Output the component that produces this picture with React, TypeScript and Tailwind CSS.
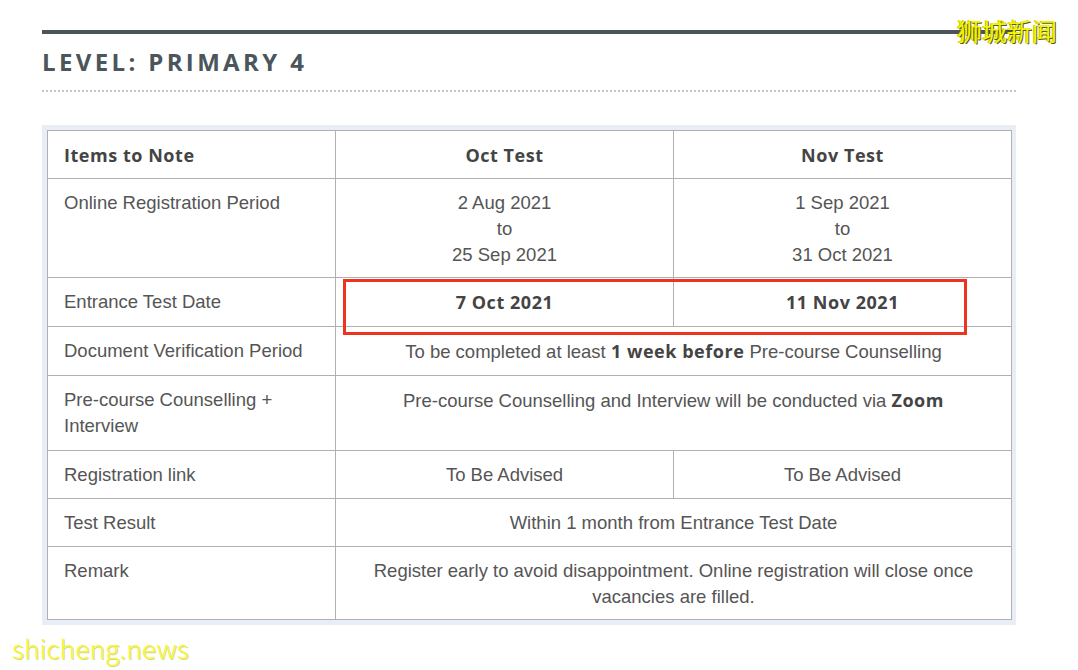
import { ReactNode } from 'react';

const cell = 'border border-[#b0b0b0] px-4 pt-[11px] pb-[9px] align-top leading-[26px]';
const bold = "font-['Open_Sans',sans-serif] text-[18px] font-bold tracking-[0.03em] text-[#444]";

function Td({ children, className = '', colSpan }: { children: ReactNode; className?: string; colSpan?: number }) {
    return (
        <td colSpan={colSpan} className={`${cell} ${className}`}>
            {children}
        </td>
    );
}

export default function App() {
    return (
        <div className="relative h-[670px] w-[1078px] overflow-hidden bg-white font-['Liberation_Sans',Arial,sans-serif] text-[18.5px] text-[#555]">
            <div className="ml-[42px] w-[974px] pt-[30px]">
                <div className="h-[4px] bg-[#4a5459]"></div>
                <h2 className="mt-[13px] font-['Open_Sans',sans-serif] text-[24px] font-bold leading-[30px] tracking-[0.14em] text-[#4b555c]">
                    LEVEL: PRIMARY 4
                </h2>
                <div className="mt-[13px] border-b-2 border-dotted border-[#c4c4c4]"></div>

                <div className="mt-[33px] bg-[#e9eef6] p-[5px]">
                    <table className="w-[964px] table-fixed border-collapse bg-white">
                        <colgroup>
                            <col className="w-[288px]" />
                            <col className="w-[338px]" />
                            <col className="w-[338px]" />
                        </colgroup>
                        <thead>
                            <tr className="h-[48px]">
                                <Td className={bold}>Items to Note</Td>
                                <Td className={`text-center ${bold}`}>Oct Test</Td>
                                <Td className={`text-center ${bold}`}>Nov Test</Td>
                            </tr>
                        </thead>
                        <tbody>
                            <tr className="h-[99px]">
                                <Td>Online Registration Period</Td>
                                <Td className="text-center">
                                    2 Aug 2021
                                    <br />
                                    to
                                    <br />
                                    25 Sep 2021
                                </Td>
                                <Td className="text-center">
                                    1 Sep 2021
                                    <br />
                                    to
                                    <br />
                                    31 Oct 2021
                                </Td>
                            </tr>
                            <tr className="h-[49px]">
                                <Td>Entrance Test Date</Td>
                                <Td className={`text-center ${bold}`}>7 Oct 2021</Td>
                                <Td className={`text-center ${bold}`}>11 Nov 2021</Td>
                            </tr>
                            <tr className="h-[49px]">
                                <Td>Document Verification Period</Td>
                                <Td colSpan={2} className="text-center">
                                    To be completed at least{' '}
                                    <strong className={bold}>1 week before</strong>{' '}
                                    Pre-course Counselling
                                </Td>
                            </tr>
                            <tr className="h-[75px]">
                                <Td>Pre-course Counselling + Interview</Td>
                                <Td colSpan={2} className="text-center">
                                    Pre-course Counselling and Interview will be conducted via{' '}
                                    <strong className={bold}>Zoom</strong>
                                </Td>
                            </tr>
                            <tr className="h-[48px]">
                                <Td>Registration link</Td>
                                <Td className="text-center">To Be Advised</Td>
                                <Td className="text-center">To Be Advised</Td>
                            </tr>
                            <tr className="h-[48px]">
                                <Td>Test Result</Td>
                                <Td colSpan={2} className="text-center">Within 1 month from Entrance Test Date</Td>
                            </tr>
                            <tr className="h-[72px]">
                                <Td>Remark</Td>
                                <Td colSpan={2} className="text-center">
                                    Register early to avoid disappointment. Online registration will close once vacancies are filled.
                                </Td>
                            </tr>
                        </tbody>
                    </table>
                </div>
            </div>

            {/* highlight box over the test dates */}
            <div className="absolute left-[343px] top-[279px] h-[56px] w-[624px] border-[3px] border-[#ee3420]"></div>

            {/* watermarks */}
            <div className="absolute left-[957px] top-[12px] font-['Noto_Sans_CJK_SC',sans-serif] text-[25px] leading-[36px] text-[#f4f400] [text-shadow:1px_1px_0_#5a5a20,-1px_0_0_#c8c800]">
                狮城新闻
            </div>
            <div className="absolute left-[12px] top-[630px] font-['Noto_Sans_CJK_SC',sans-serif] text-[26.5px] font-light leading-[36px] text-[#f7f730] [text-shadow:1px_1px_0_#d8d880]">
                shicheng.news
            </div>
        </div>
    );
}
